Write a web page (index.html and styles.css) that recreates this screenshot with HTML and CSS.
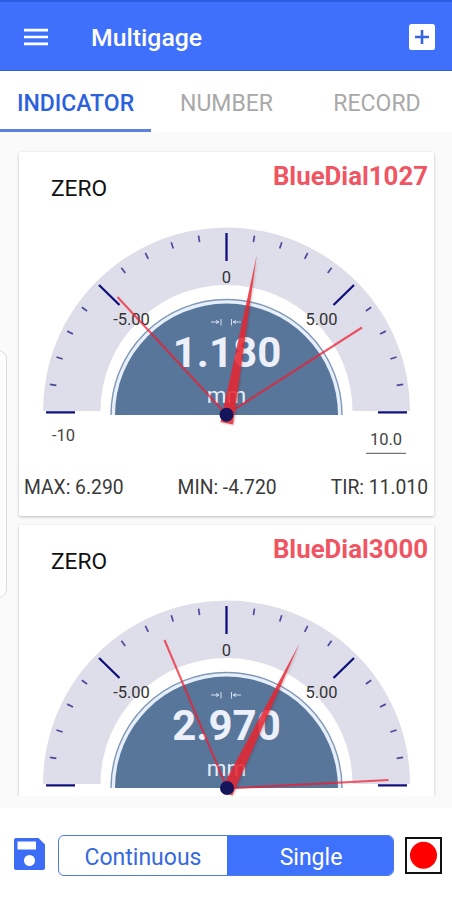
FILE: index.html
```html
<!DOCTYPE html>
<html lang="en">
<head>
<meta charset="utf-8">
<title>Multigage</title>
<link rel="stylesheet" href="styles.css">
</head>
<body>
<svg class="defs" aria-hidden="true">
  <defs>
    <g id="face">
      <path class="band" d="M43 411a183.5 183.5 0 0 1 367 0h-57.5a126 126 0 0 0-252 0z"/>
      <path class="disc-halo" d="M110.5 415a116 116 0 0 1 232 0z"/>
      <path class="disc" d="M115 415a111.5 111.5 0 0 1 223 0z"/>
      <path class="disc-edge" d="M111 415a115.5 115.5 0 0 1 231 0"/>
      <g class="minor">
        <path id="t" d="M226.5 233.5v6.5" transform="rotate(9 226.5 412.3)"/>
        <use href="#t" transform="rotate(9 226.5 412.3)"/>
        <use href="#t" transform="rotate(18 226.5 412.3)"/>
        <use href="#t" transform="rotate(27 226.5 412.3)"/>
        <use href="#t" transform="rotate(45 226.5 412.3)"/>
        <use href="#t" transform="rotate(54 226.5 412.3)"/>
        <use href="#t" transform="rotate(63 226.5 412.3)"/>
        <use href="#t" transform="rotate(72 226.5 412.3)"/>
        <use href="#t" transform="rotate(-18 226.5 412.3)"/>
        <use href="#t" transform="rotate(-27 226.5 412.3)"/>
        <use href="#t" transform="rotate(-36 226.5 412.3)"/>
        <use href="#t" transform="rotate(-45 226.5 412.3)"/>
        <use href="#t" transform="rotate(-63 226.5 412.3)"/>
        <use href="#t" transform="rotate(-72 226.5 412.3)"/>
        <use href="#t" transform="rotate(-81 226.5 412.3)"/>
        <use href="#t" transform="rotate(-90 226.5 412.3)"/>
      </g>
      <path class="major" d="M226.5 233v28M46 412.3h29M378 412.3h29M99 285l20.500 20M354 285l-20.500 20"/>
      <g class="scale">
        <text x="226.500" y="282.500">0</text>
        <text x="131.500" y="325">-5.00</text>
        <text x="321.500" y="325">5.00</text>
      </g>
      <path class="arrows" d="M211 322h8M221 319v6.500M231.500 319v6.500M233 322h8M216 320.500l3 1.500-3 1.500M236 320.500l-3 1.500 3 1.500"/>
    </g>
  </defs>
</svg>
<div class="app">
  <header class="bar">
    <svg class="menu" viewBox="0 0 24 18"><path d="M0 2.200h24M0 9h24M0 15.800h24"/></svg>
    <h1>Multigage</h1>
    <svg class="add" viewBox="0 0 26 26"><rect width="26" height="26" rx="2.500"/><path d="M13 6v14M6 13h14"/></svg>
  </header>
  <nav class="tabs">
    <span class="tab active">INDICATOR</span>
    <span class="tab">NUMBER</span>
    <span class="tab">RECORD</span>
  </nav>
  <main class="list">
    <section class="card">
      <div class="head"><span class="zero">ZERO</span><span class="name">BlueDial1027</span></div>
      <svg class="dial" viewBox="19 222 415 238">
        <use href="#face"/>
        <text class="value" x="227" y="367">1.180</text>
        <text class="unit" x="226.500" y="403">mm</text>
        <path class="limit" d="M226.500 414.500L117.500 297M226.500 414.500L362 327.500"/>
        <path class="needle" d="M256.800 255l-23.800 169.500-12.500-2.500z"/>
        <circle class="hub" cx="226.500" cy="414.700" r="7"/>
        <g class="ends">
          <text x="63.500" y="441">-10</text>
          <text x="386" y="445">10.0</text>
          <path d="M366 453.300h40"/>
        </g>
      </svg>
      <div class="stats"><span>MAX: 6.290</span><span>MIN: -4.720</span><span>TIR: 11.010</span></div>
    </section>
    <section class="card">
      <div class="head"><span class="zero">ZERO</span><span class="name">BlueDial3000</span></div>
      <svg class="dial" viewBox="19 222 415 238">
        <use href="#face"/>
        <text class="value" x="226.500" y="367">2.970</text>
        <text class="unit" x="226.500" y="403">mm</text>
        <path class="limit" d="M227 415L164.500 267M227 415.500L388.500 407"/>
        <path class="needle" d="M299.700 270l-67.500 152.500-11.500-5.500z"/>
        <circle class="hub" cx="227" cy="415" r="7"/>
      </svg>
    </section>
    <i class="edge-handle"></i>
  </main>
  <footer class="actions">
    <svg class="save" viewBox="0 0 31 32"><path d="M2 0h22.500L31 6.500V30a2 2 0 0 1-2 2H2a2 2 0 0 1-2-2V2a2 2 0 0 1 2-2zM3.500 3.500v8H22v-8zM15.500 17a5.500 5.500 0 1 0 0 11 5.500 5.500 0 0 0 0-11z"/></svg>
    <div class="segments"><span>Continuous</span><span class="on">Single</span></div>
    <svg class="rec" viewBox="0 0 37 37"><rect x="1" y="1" width="35" height="35"/><circle cx="18.500" cy="18.300" r="13.500"/></svg>
  </footer>
</div>
</body>
</html>
```
FILE: styles.css
```css
* { box-sizing: border-box; }
body { margin: 0; background: #fff; font-family: Roboto, sans-serif; }
.defs { display: block; width: 0; height: 0; }
.app { width: 452px; height: 900px; display: flex; flex-direction: column; overflow: hidden; }

.bar { flex: none; height: 71px; background: #3f70fb; border-top: 2px solid #2a5be0; border-bottom: 1px solid #2d62e6; display: flex; align-items: center; padding: 1px 17px 0 24px; }
.menu { width: 24px; height: 18px; stroke: #fff; stroke-width: 2.7; }
.bar h1 { flex: 1; margin: 3px 0 0 43px; font-size: 24.8px; font-weight: 500; line-height: 30px; color: #fff; }
.add { width: 26px; height: 26px; fill: #fff; }
.add path { stroke: #3565e0; stroke-width: 2.6; }

.tabs { flex: none; height: 61px; display: grid; grid-template-columns: 151px 151px 150px; background: #fff; }
.tab { display: flex; align-items: center; justify-content: center; padding-top: 6px; font-size: 23px; color: #a9a9a9; border-bottom: 3px solid transparent; }
.tab.active { color: #2b62dc; font-weight: 500; border-color: #5c83e4; }

.list { position: relative; flex: none; height: 676px; padding: 20px 18px 0 19px; background: #fafafa; overflow: hidden; border-bottom: 12px solid #fafafa; }
.card { height: 364px; margin-bottom: 9px; background: #fff; border-radius: 2px; box-shadow: 0 1px 3px rgba(0,0,0,.25); overflow: hidden; }
.head { height: 70px; display: flex; justify-content: space-between; padding: 7px 6px 0 32px; }
.zero { font-size: 22.7px; line-height: 26px; margin-top: 17px; color: #111; }
.name { font-size: 25.8px; font-weight: 700; line-height: 34px; color: #f05563; }
.dial { display: block; width: 415px; height: 238px; }
.stats { display: flex; justify-content: space-between; padding: 16px 6px 0 5px; font-size: 19.3px; line-height: 24px; color: #3a3a3a; }

.band { fill: #dedeea; }
.disc-halo { fill: #e6effb; }
.disc { fill: #58759a; }
.disc-edge { fill: none; stroke: #8199b5; stroke-width: 1.4; }
.minor { stroke: #4a4a9c; stroke-width: 1.7; }
.major { fill: none; stroke: #10107c; stroke-width: 2.3; }
.scale { font-size: 16.5px; fill: #333; text-anchor: middle; }
.arrows { fill: none; stroke: #d5e0ee; stroke-width: 1; }
.value { font-size: 42px; font-weight: 700; fill: #ebf0fa; text-anchor: middle; }
.unit { font-size: 22.5px; fill: #e6edf7; text-anchor: middle; }
.limit { fill: none; stroke: #f01c2c; stroke-opacity: .72; stroke-width: 2.1; }
.needle { fill: #ee2530; fill-opacity: .82; filter: drop-shadow(1px 1px 1px rgba(90,30,40,.3)); }
.hub { fill: #15155c; }
.ends { font-size: 16.5px; fill: #444; text-anchor: middle; }
.ends path { stroke: #777; stroke-width: 1.2; }

.edge-handle { position: absolute; left: -12px; top: 218px; width: 19px; height: 248px; border: 1px solid #dcdcdc; border-radius: 9px; background: #fdfdfd; }

.actions { flex: 1; display: flex; align-items: flex-start; padding: 27px 10px 0 14px; background: #fff; }
.save { width: 31px; height: 32px; margin-top: 3px; fill: #3d6df6; fill-rule: evenodd; }
.segments { display: grid; grid-template-columns: 168px 168px; width: 336px; height: 41px; margin-left: 13px; border: 1px solid #4d79e2; border-radius: 6px; overflow: hidden; font-size: 23px; color: #3769df; }
.segments span { display: flex; align-items: center; justify-content: center; padding-top: 3px; }
.segments .on { background: #3f72fc; color: #fff; }
.rec { width: 37px; height: 37px; margin: 2px 0 0 11px; }
.rec rect { fill: #fff; stroke: #111; stroke-width: 2; }
.rec circle { fill: #fe0000; }
```
